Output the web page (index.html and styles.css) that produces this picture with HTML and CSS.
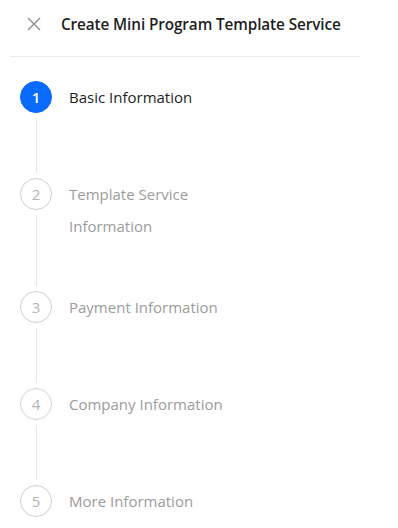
FILE: index.html
```html
<!DOCTYPE html>
<html>
<head>
<meta charset="utf-8">
<link rel="stylesheet" href="styles.css">
</head>
<body>
<div class="panel">
  <header class="header">
    <button class="close" aria-label="Close">
      <svg width="14" height="14" viewBox="0 0 14 14"><path d="M1 1L13 13M13 1L1 13" stroke="#8c8c8c" stroke-width="1.3" fill="none"/></svg>
    </button>
    <h1 class="title">Create Mini Program Template Service</h1>
  </header>
  <ol class="steps">
    <li class="step active">
      <div class="rail"><span class="dot">1</span><span class="line"></span></div>
      <div class="label">Basic Information</div>
    </li>
    <li class="step">
      <div class="rail"><span class="dot">2</span><span class="line"></span></div>
      <div class="label">Template Service<br>Information</div>
    </li>
    <li class="step">
      <div class="rail"><span class="dot">3</span><span class="line"></span></div>
      <div class="label">Payment Information</div>
    </li>
    <li class="step">
      <div class="rail"><span class="dot">4</span><span class="line"></span></div>
      <div class="label">Company Information</div>
    </li>
    <li class="step">
      <div class="rail"><span class="dot">5</span><span class="line"></span></div>
      <div class="label">More Information</div>
    </li>
  </ol>
</div>
</body>
</html>
```
FILE: styles.css
```css
* { box-sizing: border-box; }
html, body { margin: 0; padding: 0; background: #fff; overflow: hidden; }
body { font-family: "Open Sans", "Noto Sans", sans-serif; color: #1f1f1f; }
.panel { width: 350px; margin-left: 10px; }
.header {
  display: flex;
  align-items: center;
  height: 57px;
  padding: 0 0 9px 17px;
  border-bottom: 1px solid #ebebeb;
}
.close {
  border: 0; background: none; padding: 0; margin: 0;
  width: 14px; height: 14px; display: flex; cursor: pointer;
}
.title {
  margin: 0 0 0 20px;
  font-size: 15.3px;
  font-weight: 600;
  color: #1f1f1f;
  letter-spacing: -0.1px;
}
.steps { list-style: none; margin: 0; padding: 24px 0 0 10px; }
.step { display: flex; min-height: 97px; }
.rail { width: 32px; display: flex; flex-direction: column; align-items: center; }
.dot {
  width: 32px; height: 32px; border-radius: 50%;
  border: 1px solid #cfcfcf; color: #b3b3b3;
  display: flex; align-items: center; justify-content: center;
  font-size: 15px; flex: none;
}
.active .dot { background: #0a6cff; border-color: #0a6cff; color: #fff; font-weight: 600; }
.line { flex: 1; width: 1px; background: #e6e6e6; margin: 5px 0; }
.step:last-child .line { display: none; }
.label {
  margin-left: 17px;
  font-size: 15px;
  line-height: 32px;
  color: #9c9c9c;
  padding-bottom: 49px;
}
.active .label { color: #1f1f1f; }
```
